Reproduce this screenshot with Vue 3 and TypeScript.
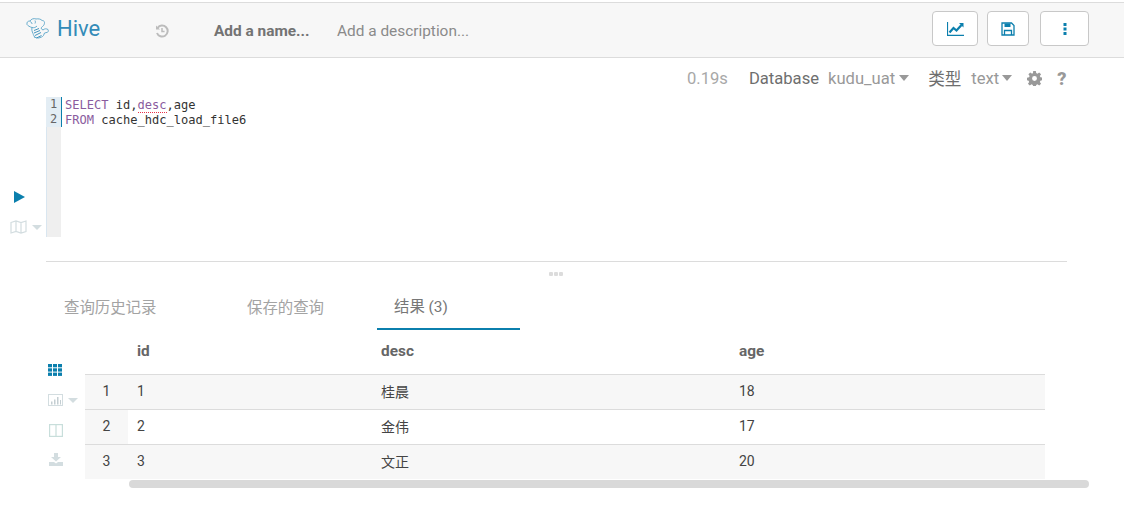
<script setup lang="ts">
const rows = [
  { n: 1, id: '1', desc: '桂晨', age: '18' },
  { n: 2, id: '2', desc: '金伟', age: '17' },
  { n: 3, id: '3', desc: '文正', age: '20' },
]
</script>

<template>
  <div class="page">
    <header class="top">
      <div class="brand">
        <svg class="logo" width="24" height="23" viewBox="0 0 24 23" fill="none" stroke="#5aa5c8" stroke-width=".9">
          <path d="M1 6.500C.5 4 2 3 4 3c1-2 4-3 6-2 2-.5 5 0 6 1.500 1 0 2.500.5 2.500 2 0 1.500-.5 3-2 4-1 .5-1.500 1.500-1 2.500l1.500 1c1.500-1.500 3.500-1.500 5-.5.500 1 .5 2-.5 2.800l-3 .7-1 2.500c-1 1.500-3 2-5 2.500-2 0-3.500-.5-4.500-1.500" />
          <path d="M1 6.500c.500 1 3 2.500 5 3 2 .5 3.500 0 5-1.500M6 9.500c-.5 2 0 4 1 6 .5 1.500 1 3 2.500 4.500" />
          <path d="M4 3.500c1 .5 2 1 2 2.500M9 2.500c.5 1 .5 2 0 3" />
          <path d="M8 12.500l5-2M8 15l6-2.500M9 17.500l6-3M10.500 20l5-2.500" stroke="#338bb8" />
        </svg>
        <span class="hive">Hive</span>
      </div>
      <svg class="hist" width="14" height="14" viewBox="0 0 14 14" fill="none" stroke="#bcbcbc" stroke-width="2">
        <path d="M2.600 4A5.500 5.500 0 1 1 2 9" />
        <path d="M1 1.500v4h4" fill="#bcbcbc" stroke="none" />
        <path d="M7 4v3.400h2.600" stroke-width="1.500" />
      </svg>
      <span class="name">Add a name...</span>
      <span class="descr">Add a description...</span>
      <div class="actions">
        <button class="btn b1">
          <svg width="17" height="14" viewBox="0 0 17 14" fill="none" stroke="#0b7fad">
            <path d="M.5 0v13.300h16.500" stroke-width="1.200" />
            <path d="M2.500 10.500l4-4.500 3 2.500L14.500 3" stroke-width="2.200" />
            <path d="M12 1h4.500v4.500z" fill="#0b7fad" stroke="none" />
          </svg>
        </button>
        <button class="btn b2">
          <svg width="14" height="14" viewBox="0 0 14 14" fill="none" stroke="#0b7fad" stroke-width="1.300">
            <path d="M1 1h9.500L13 3.500V13H1z" />
            <path d="M3.500 1.500h6v3.500h-6z" fill="#0b7fad" stroke="none" />
            <path d="M3.500 13V8.500h7V13" />
          </svg>
        </button>
        <button class="btn b3">
          <svg width="4" height="14" viewBox="0 0 4 14" fill="#0b7fad">
            <rect x=".5" y="1" width="3" height="3" />
            <rect x=".5" y="5.500" width="3" height="3" />
            <rect x=".5" y="10" width="3" height="3" />
          </svg>
        </button>
      </div>
    </header>

    <div class="meta">
      <span class="time">0.19s</span>
      <span class="label">Database</span>
      <span class="val">kudu_uat</span><i class="caret mr20"></i>
      <span class="label cn">类型</span>
      <span class="val">text</span><i class="caret t mr14"></i>
      <svg class="gear" width="15" height="15" viewBox="0 0 16 16" fill="#999">
        <path fill-rule="evenodd" d="M6.600 0h2.800l.4 2.200 1.300.6 1.900-1.300 2 2-1.300 1.900.6 1.300 2.200.4v2.800l-2.200.4-.6 1.300 1.300 1.900-2 2-1.900-1.300-1.300.6-.4 2.200H6.600l-.4-2.200-1.300-.6L3 15.500l-2-2 1.300-1.900-.6-1.300L0 9.900V7.100l2.200-.4.6-1.300L1.500 3.500l2-2 1.900 1.300 1-.6zM8 5.400a2.600 2.600 0 1 0 0 5.200 2.600 2.600 0 0 0 0-5.200z" />
      </svg>
      <span class="help">?</span>
    </div>

    <section class="editor">
      <div class="side">
        <svg class="play" width="11" height="12" viewBox="0 0 11 12"><path d="M0 0l11 6-11 6z" fill="#0b7fad" /></svg>
        <div class="mapline">
          <svg width="17" height="14" viewBox="0 0 17 14" fill="none" stroke="#d3dde0" stroke-width="1.200">
            <path d="M1 2.500l5-1.500 5 1.500 5-1.500v10.500l-5 1.500-5-1.500-5 1.500zM6 1v10.500M11 2.500V13" />
          </svg>
          <i class="caret light"></i>
        </div>
      </div>
      <div class="gutter">
        <div class="nums"><div>1</div><div>2</div></div>
      </div>
      <pre class="code"><span class="kw">SELECT</span> id,<span class="kw err">desc</span>,age
<span class="kw">FROM</span> cache_hdc_load_file6</pre>
    </section>

    <div class="rule"></div>
    <div class="grip"><i></i><i></i><i></i></div>

    <nav class="tabs">
      <a class="tab t1">查询历史记录</a>
      <a class="tab t2">保存的查询</a>
      <a class="tab t3">结果 (3)</a>
    </nav>

    <section class="results">
      <div class="tools">
        <svg class="t-grid" width="15" height="12" viewBox="0 0 15 12" fill="#0b7fad">
          <rect x="0" y="0" width="4" height="3.300" /><rect x="5" y="0" width="4" height="3.300" /><rect x="10" y="0" width="4" height="3.300" />
          <rect x="0" y="4.300" width="4" height="3.300" /><rect x="5" y="4.300" width="4" height="3.300" /><rect x="10" y="4.300" width="4" height="3.300" />
          <rect x="0" y="8.600" width="4" height="3.300" /><rect x="5" y="8.600" width="4" height="3.300" /><rect x="10" y="8.600" width="4" height="3.300" />
        </svg>
        <div class="mapline chart">
          <svg width="15" height="12" viewBox="0 0 15 12" fill="none" stroke="#d3dde0">
            <rect x=".5" y=".5" width="14" height="11" />
            <path d="M3 7.500h1.500v3H3zM6 5.500h1.500v5H6zM9 3h1.500v7.500H9zM12 6h1v4.500h-1z" fill="#c4ced2" stroke="none" />
          </svg>
          <i class="caret light"></i>
        </div>
        <svg class="t-cols" width="14" height="13" viewBox="0 0 14 13" fill="none" stroke="#c8dedb" stroke-width="1.200">
          <rect x=".6" y=".6" width="12.800" height="11.800" /><path d="M7 .6v11.800" />
        </svg>
        <svg class="t-dl" width="14" height="13" viewBox="0 0 14 13" fill="#d3dde0">
          <path d="M5 0h4v4h3L7 8.500 2 4h3zM0 9h5l2 1.500L9 9h5v4H0z" />
        </svg>
      </div>
      <div class="tablewrap">
        <div class="thead">
          <span class="c0"></span><span class="c1">id</span><span class="c2">desc</span><span class="c3">age</span>
        </div>
        <div class="tbody">
          <div v-for="r in rows" :key="r.n" class="row" :class="{ odd: r.n % 2 === 1 }">
            <span class="c0 num">{{ r.n }}</span><span class="c1">{{ r.id }}</span><span class="c2">{{ r.desc }}</span><span class="c3">{{ r.age }}</span>
          </div>
        </div>
        <div class="scroll"></div>
      </div>
    </section>
  </div>
</template>

<style>
html, body { margin: 0; background: #fff; }
</style>

<style scoped>
.page {
  width: 1124px;
  height: 509px;
  overflow: hidden;
  padding-top: 2px;
  box-sizing: border-box;
  font-family: Roboto, "Noto Sans CJK SC", sans-serif;
  font-size: 14px;
  color: #444;
}
.top {
  height: 56px;
  box-sizing: border-box;
  background: #f7f7f7;
  border-top: 1px solid #dcdcdc;
  border-bottom: 1px solid #dcdcdc;
  display: flex;
  align-items: center;
  padding-left: 26px;
  font-size: 15.4px;
}
.brand { display: flex; align-items: center; width: 129px; height: 30px; margin-top: -4px; }
.logo { margin-right: 7px; margin-top: 2px; }
.hive { font-size: 22px; color: #338bb8; }
.hist { margin-right: 45px; margin-top: 2px; }
.name { font-weight: 700; color: #737373; width: 123px; margin-top: 2px; }
.descr { color: #8a8a8a; margin-top: 2px; }
.actions { margin-left: auto; display: flex; margin-right: 35px; margin-top: -3px; }
.btn {
  height: 35px;
  background: #fff;
  border: 1px solid #c8c8c8;
  border-radius: 4px;
  display: flex;
  align-items: center;
  justify-content: center;
  padding: 0;
}
.b1 { width: 46px; margin-right: 9px; }
.b2 { width: 42px; margin-right: 11px; }
.b3 { width: 49px; }
.meta {
  height: 40px;
  display: flex;
  align-items: center;
  padding-left: 687px;
  font-size: 16.6px;
}
.time { color: #a8a8a8; margin-right: 21px; }
.label { color: #6e6e6e; margin-right: 9px; }
.label.cn { margin-right: 10px; }
.val { color: #999; }
.caret {
  display: inline-block;
  width: 0;
  height: 0;
  border-left: 5.500px solid transparent;
  border-right: 5.500px solid transparent;
  border-top: 6px solid #999;
  margin-left: 4px;
}
.caret.t { margin-left: 3px; }
.mr20 { margin-right: 19px; }
.mr14 { margin-right: 15px; }
.caret.light { border-top-color: #d3dde0; margin-left: 5px; border-left-width: 5px; border-right-width: 5px; border-top-width: 5px; }
.gear { margin-right: 15px; }
.help { color: #999; font-weight: 900; font-size: 18px; }
.editor { display: flex; height: 140px; margin-top: -1px; }
.side {
  width: 46px;
  display: flex;
  flex-direction: column;
  align-items: flex-start;
  padding: 94px 0 0 14px;
  box-sizing: border-box;
}
.play { display: block; }
.mapline { display: flex; align-items: center; margin-top: 17px; margin-left: -4px; }
.gutter { width: 15px; background: #efefef; border-left: 1px solid #d9e6f0; box-sizing: border-box; }
.nums {
  background: #e3edf4;
  border-right: 1px solid #0b7fad;
  margin-left: -1px;
  width: 15px;
  height: 30px;
  font: 12px/15px "DejaVu Sans Mono", monospace;
  color: #666;
  text-align: center;
}
.code {
  margin: 1px 0 0 4px;
  font: 12.050px/15px "DejaVu Sans Mono", monospace;
  color: #333;
}
.kw { color: #8a5c9e; }
.err { border-bottom: 1px dotted #e8324a; }
.rule { height: 1px; background: #dcdcdc; margin: 24px 57px 0 46px; }
.grip { display: flex; gap: 1px; justify-content: center; margin-top: 10px; height: 4px; padding-right: 12px; margin-bottom: -1px; }
.grip i { width: 4px; height: 4px; background: #dcdcdc; border-radius: 1px; }
.tabs { display: flex; height: 54px; padding-left: 46px; font-size: 15.4px; }
.tab { color: #a3a3a3; height: 55px; display: flex; align-items: center; box-sizing: border-box; padding-top: 6px; white-space: nowrap; }
.t1 { width: 183px; padding-left: 18px; }
.t2 { width: 148px; padding-left: 18px; }
.t3 { width: 143px; padding-left: 17px; color: #777; border-bottom: 2px solid #0b7fad; }
.results { display: flex; }
.tools {
  width: 85px;
  box-sizing: border-box;
  padding: 35px 0 0 48px;
  display: flex;
  flex-direction: column;
  align-items: flex-start;
}
.chart { margin: 18px 0 0 0; }
.t-cols { margin-top: 18px; margin-left: 1px; }
.t-dl { margin-top: 16px; margin-left: 1px; }
.tablewrap { width: 960px; }
.thead, .row { display: grid; grid-template-columns: 43px 244px 358px 315px; }
.thead { height: 46px; font-weight: 700; font-size: 15.400px; color: #666; align-items: center; border-bottom: 1px solid #dcdcdc; box-sizing: border-box; padding-bottom: 2px; }
.row {
  height: 35px;
  align-items: center;
  border-bottom: 1px solid #dcdcdc;
  box-sizing: border-box;
  color: #444;
  padding-bottom: 2px;
}
.row:last-child { border-bottom: none; height: 34px; }
.row.odd { background: #f7f7f7; }
.num { background: #f7f7f7; align-self: stretch; display: flex; align-items: center; justify-content: center; margin-bottom: -2px; padding-bottom: 2px; }
.c1, .c2, .c3 { padding-left: 9px; }
.scroll {
  margin: 1px 0 0 44px;
  width: 960px;
  height: 8px;
  border-radius: 4px;
  background: #d9d9d9;
}
</style>
